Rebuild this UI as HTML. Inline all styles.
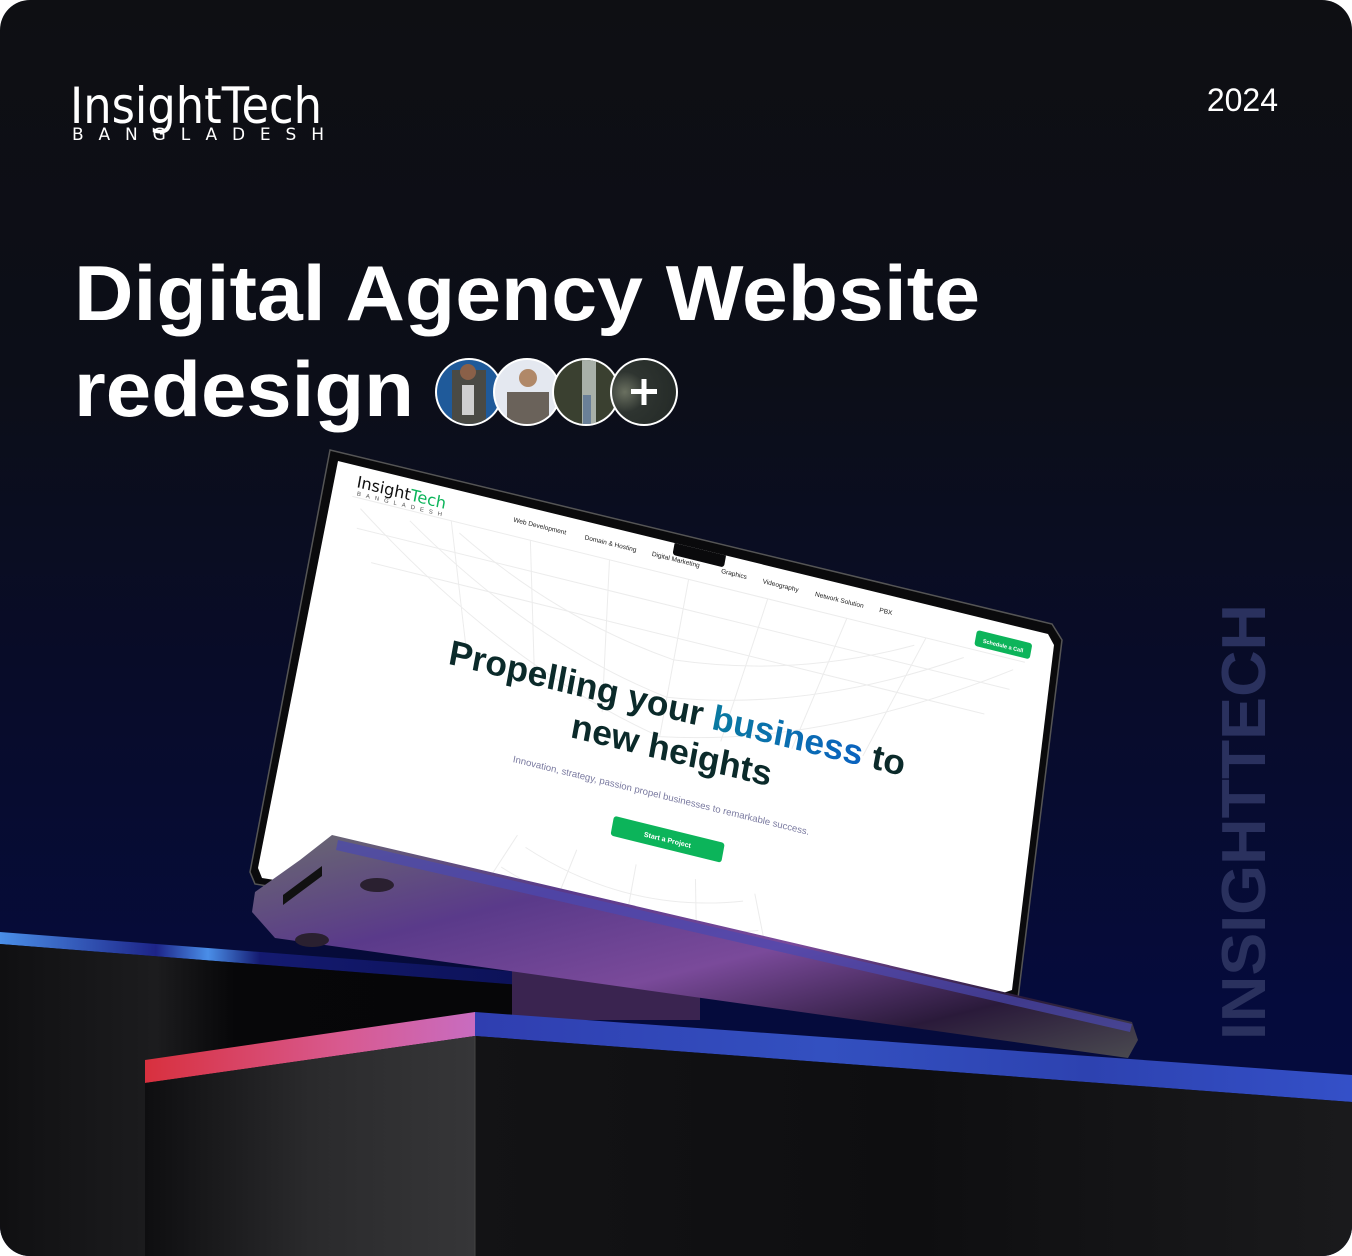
<!DOCTYPE html>
<html><head><meta charset="utf-8"><style>
html,body{margin:0;padding:0;background:#fff;}
svg{display:block}
</style></head><body>
<svg width="1352" height="1256" viewBox="0 0 1352 1256" xmlns="http://www.w3.org/2000/svg" font-family="Liberation Sans, sans-serif">
<defs>
<linearGradient id="bg" x1="0" y1="0" x2="0" y2="1">
<stop offset="0" stop-color="#0e0f13"/><stop offset="0.3" stop-color="#0c0e18"/><stop offset="0.55" stop-color="#080c2a"/><stop offset="0.8" stop-color="#050b3c"/><stop offset="1" stop-color="#050a40"/>
</linearGradient>
<clipPath id="card"><rect x="0" y="0" width="1352" height="1256" rx="30"/></clipPath>
<clipPath id="scr"><polygon points="338,461 1048,634 1054,645 1012,990 1000,994 262,878 258,868"/></clipPath>
<linearGradient id="redband" x1="0" y1="0" x2="1" y2="0"><stop offset="0" stop-color="#d8303e"/><stop offset="0.6" stop-color="#d85a90"/><stop offset="1" stop-color="#c86cc0"/></linearGradient>
<linearGradient id="blueband" x1="0" y1="0" x2="1" y2="0"><stop offset="0" stop-color="#2f3eb0"/><stop offset="0.4" stop-color="#3350c0"/><stop offset="0.7" stop-color="#2d42b0"/><stop offset="1" stop-color="#3450c8"/></linearGradient>
<linearGradient id="backband" x1="0" y1="0" x2="1" y2="0"><stop offset="0" stop-color="#4a8ee8"/><stop offset="0.3" stop-color="#1d2488"/><stop offset="0.4" stop-color="#4a8ee8"/><stop offset="0.5" stop-color="#141a70"/><stop offset="1" stop-color="#0c1258"/></linearGradient>
<linearGradient id="backface" x1="0" y1="0" x2="1" y2="0"><stop offset="0" stop-color="#101012"/><stop offset="0.3" stop-color="#1c1c1e"/><stop offset="0.45" stop-color="#070709"/><stop offset="1" stop-color="#060608"/></linearGradient>
<linearGradient id="frontL" x1="0" y1="0" x2="1" y2="0"><stop offset="0" stop-color="#0e0e10"/><stop offset="0.5" stop-color="#2a2a2c"/><stop offset="1" stop-color="#363638"/></linearGradient>
<linearGradient id="frontR" x1="0" y1="0" x2="1" y2="0"><stop offset="0" stop-color="#131315"/><stop offset="0.5" stop-color="#0e0e10"/><stop offset="1" stop-color="#1a1a1c"/></linearGradient>
<linearGradient id="base" x1="0" y1="0" x2="1" y2="1"><stop offset="0" stop-color="#6a6a70"/><stop offset="0.3" stop-color="#5a3a8a"/><stop offset="0.55" stop-color="#7a4a9a"/><stop offset="0.8" stop-color="#2a1a3a"/><stop offset="1" stop-color="#4a4a50"/></linearGradient>
<linearGradient id="busi" x1="0" y1="0" x2="1" y2="0"><stop offset="0" stop-color="#0aa36a"/><stop offset="1" stop-color="#0a5cc8"/></linearGradient>
<radialGradient id="av4" cx="0.2" cy="0.5" r="0.8"><stop offset="0" stop-color="#6a7060"/><stop offset="0.4" stop-color="#2e3430"/><stop offset="1" stop-color="#252b28"/></radialGradient>
<clipPath id="c1"><circle cx="469" cy="392" r="32"/></clipPath>
<clipPath id="c2"><circle cx="527" cy="392" r="32"/></clipPath>
<clipPath id="c3"><circle cx="586" cy="392" r="32"/></clipPath>
</defs>
<g clip-path="url(#card)">
<rect width="1352" height="1256" fill="url(#bg)"/>

<text x="70" y="123" font-size="50" fill="#fff" font-family="DejaVu Sans, sans-serif" textLength="252" lengthAdjust="spacingAndGlyphs">InsightTech</text>
<text x="72" y="140" font-size="17" fill="#fff" font-family="DejaVu Sans, sans-serif" textLength="252" lengthAdjust="spacing">BANGLADESH</text>
<text x="1278" y="111" font-size="32" fill="#fff" text-anchor="end">2024</text>

<text x="74" y="320" font-size="78" font-weight="bold" fill="#fff" textLength="906" lengthAdjust="spacingAndGlyphs">Digital Agency Website</text>
<text x="74" y="416" font-size="78" font-weight="bold" fill="#fff" textLength="340" lengthAdjust="spacingAndGlyphs">redesign</text>

<circle cx="469" cy="392" r="34" fill="#fff"/>
<g clip-path="url(#c1)"><rect x="430" y="355" width="80" height="80" fill="#1f5a9a"/><rect x="452" y="370" width="34" height="60" fill="#4a4a44"/><rect x="462" y="385" width="12" height="30" fill="#cfcfcf"/><circle cx="468" cy="372" r="8" fill="#8a6048"/></g>
<circle cx="527" cy="392" r="34" fill="#fff"/>
<g clip-path="url(#c2)"><rect x="490" y="355" width="80" height="80" fill="#e4e8f0"/><rect x="507" y="392" width="42" height="40" fill="#6a625a"/><circle cx="528" cy="378" r="9" fill="#b08868"/></g>
<circle cx="586" cy="392" r="34" fill="#fff"/>
<g clip-path="url(#c3)"><rect x="550" y="355" width="80" height="80" fill="#3a4030"/><rect x="582" y="358" width="14" height="70" fill="#a8b0a8"/><rect x="583" y="395" width="8" height="30" fill="#6a8098"/></g>
<circle cx="644" cy="392" r="34" fill="#fff"/>
<circle cx="644" cy="392" r="32" fill="url(#av4)"/>
<rect x="631" y="389" width="26" height="5" fill="#fff"/><rect x="641.5" y="379" width="5" height="26" fill="#fff"/>

<!-- back platform -->
<polygon points="0,932 520,972 520,985 0,944" fill="url(#backband)"/>
<polygon points="0,944 520,985 520,1256 0,1256" fill="url(#backface)"/>

<!-- laptop screen -->
<polygon points="330,450 1052,624 1062,640 1018,998 1004,1004 255,884 250,872" fill="#0a0a0c" stroke="#555" stroke-width="1.5"/>
<polygon points="338,461 1048,634 1054,645 1012,990 1000,994 262,878 258,868" fill="#fff"/>
<g clip-path="url(#scr)">
<g transform="matrix(0.989,0.244,-0.181,0.983,338,462)">
<g stroke="#ececec" stroke-width="1" fill="none">
<path d="M30 40 Q200 160 360 190 Q520 160 690 40"/>
<path d="M80 40 Q220 130 360 150 Q500 130 640 40"/>
<path d="M130 40 Q240 100 360 112 Q480 100 590 40"/>
<path d="M20 30 L700 30 M30 60 L690 60 M50 90 L670 90"/>
<path d="M120 30 L160 160 M200 30 L230 170 M280 30 L300 180 M360 30 L360 190 M440 30 L420 180 M520 30 L490 170 M600 30 L560 160"/>
<path d="M250 330 Q360 370 470 330 M230 355 Q360 400 490 355 M300 320 L280 420 M420 320 L440 420 M360 320 L360 420 M240 320 L200 420 M480 320 L520 420"/>
</g>
<rect x="340" y="-4" width="52" height="14" rx="3" fill="#0a0a0c"/>
<text x="22" y="20" font-size="16" fill="#111" font-family="DejaVu Sans, sans-serif">Insight<tspan fill="#0cb45a">Tech</tspan></text>
<text x="24" y="28" font-size="6" fill="#555" letter-spacing="5">BANGLADESH</text>
<g font-size="6.5" fill="#222">
<text x="180" y="16">Web Development</text><text x="252" y="16">Domain &amp; Hosting</text><text x="320" y="16">Digital Marketing</text>
<text x="390" y="16">Graphics</text><text x="432" y="16">Videography</text><text x="485" y="16">Network Solution</text><text x="550" y="16">PBX</text>
</g>
<rect x="648" y="10" width="56" height="16" rx="3" fill="#0cb45a"/>
<text x="676" y="21" font-size="5.5" fill="#fff" text-anchor="middle" font-weight="bold">Schedule a Call</text>
<text x="372" y="170" font-size="35" font-weight="bold" fill="#0b2a2a" text-anchor="middle">Propelling your <tspan fill="url(#busi)">business</tspan> to</text>
<text x="374" y="212" font-size="35" font-weight="bold" fill="#0b2a2a" text-anchor="middle">new heights</text>
<text x="372" y="250" font-size="9.5" fill="#7a7aa0" text-anchor="middle">Innovation, strategy, passion propel businesses to remarkable success.</text>
<rect x="330" y="278" width="112" height="20" rx="3" fill="#0cb45a"/>
<text x="386" y="291" font-size="7" font-weight="bold" fill="#fff" text-anchor="middle">Start a Project</text>
</g>
</g>

<!-- laptop base -->
<polygon points="512,930 700,975 700,1020 512,1020" fill="#3a2450"/>
<polygon points="332,835 1132,1022 1138,1040 1128,1058 275,938 252,912 255,892 300,860" fill="url(#base)"/>
<polygon points="338,840 1132,1024 1130,1032 336,850" fill="#4a48b0" opacity="0.7"/>
<ellipse cx="377" cy="885" rx="17" ry="7" fill="#2a2030"/>
<ellipse cx="312" cy="940" rx="17" ry="7" fill="#2a2030"/>
<polygon points="283,895 322,866 322,876 283,905" fill="#111"/>

<!-- front platform -->
<polygon points="145,1060 475,1012 475,1036 145,1083" fill="url(#redband)"/>
<polygon points="475,1012 1352,1075 1352,1102 475,1036" fill="url(#blueband)"/>
<polygon points="145,1083 475,1036 475,1256 145,1256" fill="url(#frontL)"/>
<polygon points="475,1036 1352,1102 1352,1256 475,1256" fill="url(#frontR)"/>
<line x1="475" y1="1036" x2="475" y2="1256" stroke="#444" stroke-width="1"/>

<text transform="translate(1265,1040) rotate(-90)" font-size="62" font-weight="bold" fill="#2a315e" textLength="436" lengthAdjust="spacingAndGlyphs">INSIGHTTECH</text>
</g>
</svg>
</body></html>
